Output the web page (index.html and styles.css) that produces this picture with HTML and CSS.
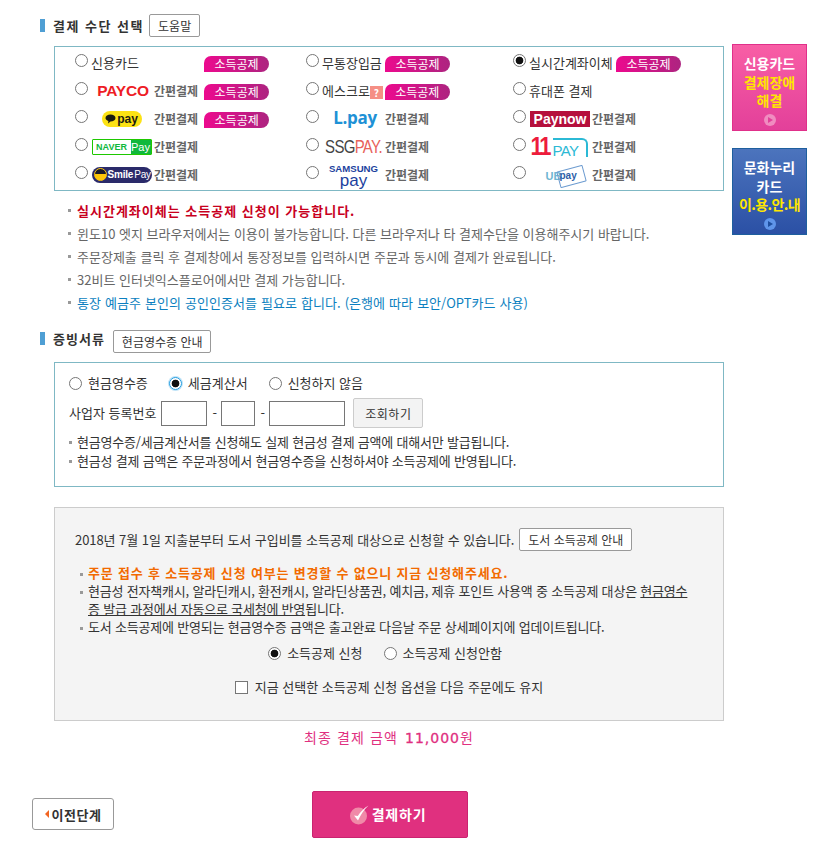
FILE: index.html
```html
<!DOCTYPE html>
<html lang="ko">
<head>
    <meta charset="utf-8">
    <title>결제</title>
    <link rel="stylesheet" href="styles.css">
</head>
<body>
    <div class="page">
        <div class="main">
            <div class="sec-title first">
                <h3>결제 수단 선택</h3>
                <button class="btn-small">도움말</button>
            </div>
            <div class="box paybox">
                <div class="cell"><input type="radio" name="pay"><span class="lbl wide1">신용카드</span><span class="badge">소득공제</span></div>
                <div class="cell"><input type="radio" name="pay"><span class="lbl wide2">무통장입금</span><span class="badge">소득공제</span></div>
                <div class="cell"><input type="radio" name="pay" checked><span class="lbl wide3">실시간계좌이체</span><span class="badge">소득공제</span></div>

                <div class="cell"><input type="radio" name="pay"><span class="logo logo1"><span class="payco">PAYCO</span></span><span class="easy">간편결제</span><span class="badge after-easy">소득공제</span></div>
                <div class="cell"><input type="radio" name="pay"><span class="lbl">에스크로</span><span class="qmark">?</span><span class="badge">소득공제</span></div>
                <div class="cell"><input type="radio" name="pay"><span class="lbl">휴대폰 결제</span></div>

                <div class="cell"><input type="radio" name="pay"><span class="logo logo1"><span class="kakao"><svg width="11" height="10" viewBox="0 0 11 10"><path d="M5.500 0.500C8.300 0.500 10.500 2 10.500 4S8.300 7.500 5.500 7.500L3 9.500 3.400 7.100C1.700 6.500 0.500 5.400 0.500 4 0.500 2 2.700 0.500 5.500 0.500Z" fill="#1a1a10"/></svg>pay</span></span><span class="easy">간편결제</span><span class="badge after-easy">소득공제</span></div>
                <div class="cell"><input type="radio" name="pay"><span class="logo logo2"><span class="lpay">L.pay</span></span><span class="easy">간편결제</span></div>
                <div class="cell"><input type="radio" name="pay"><span class="logo logo3"><span class="paynow">Paynow</span></span><span class="easy">간편결제</span></div>

                <div class="cell"><input type="radio" name="pay"><span class="logo logo1"><span class="naver"><b>NAVER</b><i>Pay</i></span></span><span class="easy">간편결제</span></div>
                <div class="cell"><input type="radio" name="pay"><span class="logo logo2"><span class="ssg">SSG<em>PAY.</em></span></span><span class="easy">간편결제</span></div>
                <div class="cell"><input type="radio" name="pay"><span class="logo logo3"><span class="elev"><b>11</b><i>PAY</i></span></span><span class="easy">간편결제</span></div>

                <div class="cell"><input type="radio" name="pay"><span class="logo logo1"><span class="smile"><u></u>Smile<small>Pay</small></span></span><span class="easy">간편결제</span></div>
                <div class="cell"><input type="radio" name="pay"><span class="logo logo2"><span class="samsung"><b>SAMSUNG</b><i>pay</i></span></span><span class="easy">간편결제</span></div>
                <div class="cell"><input type="radio" name="pay"><span class="logo logo3"><span class="ubpay"><b>UB</b><i>pay</i></span></span><span class="easy">간편결제</span></div>
            </div>
            <ul class="notes">
                <li class="red">실시간계좌이체는 소득공제 신청이 가능합니다.</li>
                <li>윈도10 엣지 브라우저에서는 이용이 불가능합니다. 다른 브라우저나 타 결제수단을 이용해주시기 바랍니다.</li>
                <li>주문장제출 클릭 후 결제창에서 통장정보를 입력하시면 주문과 동시에 결제가 완료됩니다.</li>
                <li>32비트 인터넷익스플로어에서만 결제 가능합니다.</li>
                <li class="blue">통장 예금주 본인의 공인인증서를 필요로 합니다. (은행에 따라 보안/OPT카드 사용)</li>
            </ul>

            <div class="sec-title second">
                <h3 class="tight">증빙서류</h3>
                <button class="btn-small">현금영수증 안내</button>
            </div>
            <div class="box receipt">
                <div class="radio-row">
                    <label><input type="radio" name="rc">현금영수증</label>
                    <label><input type="radio" name="rc" class="focused" checked>세금계산서</label>
                    <label><input type="radio" name="rc">신청하지 않음</label>
                </div>
                <div class="biz-row">
                    <span>사업자 등록번호</span>
                    <input type="text" class="w46"><span class="dash">-</span>
                    <input type="text" class="w34"><span class="dash">-</span>
                    <input type="text" class="w76">
                    <button class="btn-gray">조회하기</button>
                </div>
                <ul class="mini">
                    <li>현금영수증/세금계산서를 신청해도 실제 현금성 결제 금액에 대해서만 발급됩니다.</li>
                    <li>현금성 결제 금액은 주문과정에서 현금영수증을 신청하셔야 소득공제에 반영됩니다.</li>
                </ul>
            </div>

            <div class="deduct">
                <div class="deduct-top">
                    <span class="deduct-text">2018년 7월 1일 지출분부터 도서 구입비를 소득공제 대상으로 신청할 수 있습니다.</span>
                    <button class="btn-small">도서 소득공제 안내</button>
                </div>
                <ul class="mini">
                    <li class="orange">주문 접수 후 소득공제 신청 여부는 변경할 수 없으니 지금 신청해주세요.</li>
                    <li>현금성 전자책캐시, 알라딘캐시, 환전캐시, 알라딘상품권, 예치금, 제휴 포인트 사용액 중 소득공제 대상은 <u>현금영수증 발급 과정에서 자동으로 국세청에 반영</u>됩니다.</li>
                    <li>도서 소득공제에 반영되는 현금영수증 금액은 출고완료 다음날 주문 상세페이지에 업데이트됩니다.</li>
                </ul>
                <div class="radio-row center">
                    <label><input type="radio" name="dd" checked>소득공제 신청</label>
                    <label><input type="radio" name="dd">소득공제 신청안함</label>
                </div>
                <label class="keep"><input type="checkbox">지금 선택한 소득공제 신청 옵션을 다음 주문에도 유지</label>
            </div>

            <div class="total">최종 결제 금액 <b>11,000</b>원</div>

            <div class="actions">
                <button class="btn-prev"><span class="arrow"></span>이전단계</button>
                <button class="btn-pay">
                    <svg width="19" height="21" viewBox="0 0 19 21"><circle cx="8.500" cy="12" r="8.500" fill="#f08aa8"/><path d="M4 11.500 8 16.500C10 12 13.500 6 18.500 1.500 13.500 4.500 10.500 8 7.800 12Z" fill="#fff"/></svg>
                    결제하기
                </button>
            </div>
        </div>

        <div class="side">
            <a class="banner pink"><span>신용카드</span><span class="yellow">결제장애<br>해결</span><i class="play"></i></a>
            <a class="banner navy"><span>문화누리<br>카드</span><span class="yellow">이.용.안.내</span><i class="play"></i></a>
        </div>
    </div>
</body>
</html>
```

FILE: styles.css
```css
* {
    box-sizing: border-box;
}
body, ul, h3 {
    margin: 0;
}
ul {
    padding-left: 0;
    list-style-type: none;
}
body {
    background: #fff;
    color: #333;
    font-family: "Noto Sans CJK KR", "Liberation Sans", sans-serif;
    font-size: 13px;
    line-height: 16px;
}
button {
    font-family: inherit;
    padding: 0;
    cursor: pointer;
}
input[type=radio] {
    appearance: none;
    flex: none;
    width: 13px;
    height: 13px;
    margin: 0;
    border: 1px solid #767676;
    border-radius: 50%;
    background: #fff;
}
input[type=radio]:checked {
    background: radial-gradient(circle, #111 0, #111 3.5px, #fff 4.2px);
}
input[type=radio].focused {
    border-color: #1f9be0;
    box-shadow: 0 0 0 1px #bfe3f7;
}
.page {
    display: flex;
    align-items: flex-start;
    padding-left: 40px;
}
.main {
    width: 684px;
    flex: none;
}
.sec-title {
    display: flex;
    align-items: center;
    height: 23px;
    margin-top: 14px;
}
.sec-title.second {
    margin-top: 16px;
}
.sec-title h3 {
    font-size: 13px;
    font-weight: 700;
    letter-spacing: 1.5px;
    color: #333;
    border-left: 5px solid #4f9fd4;
    padding-left: 8px;
    height: 13px;
    line-height: 13px;
    margin-right: 5px;
}
.sec-title h3.tight {
    letter-spacing: 1px;
    margin-right: 8px;
    margin-bottom: 6px;
}
.btn-small {
    height: 23px;
    padding: 0 8px;
    background: #fff;
    border: 1px solid #999;
    border-radius: 2px;
    font-size: 12px;
    color: #333;
}
.box {
    border: 1px solid #7fb8c4;
    margin-left: 14px;
    width: 670px;
}
.paybox {
    display: grid;
    grid-template-columns: 231px 207px 1fr;
    grid-auto-rows: 27.8px;
    height: 145px;
    margin-top: 9px;
    padding: 2px 0 0 20px;
}
.cell {
    display: flex;
    align-items: center;
    position: relative;
}
.cell input {
    margin: -4px 3px 0 0;
}
.lbl {
    white-space: nowrap;
}
.wide1 {
    width: 113px;
}
.wide2 {
    width: 63px;
}
.wide3 {
    width: 87px;
}
.badge {
    width: 65px;
    height: 16px;
    margin-top: 3px;
    border-radius: 7px 8px 8px 0;
    background: linear-gradient(90deg, #ec0a8e, #ad2480);
    color: #fff;
    font-size: 12px;
    line-height: 16px;
    text-align: center;
}
.after-easy {
    margin-left: 6px;
}
.easy {
    font-size: 12px;
    font-weight: 700;
    color: #666;
    white-space: nowrap;
    margin-top: 1px;
}
.logo {
    display: flex;
    align-items: center;
    justify-content: center;
    height: 20px;
    margin-top: 1px;
    white-space: nowrap;
}
.logo1 {
    width: 63px;
    margin-left: -1px;
    margin-right: 1px;
}
.logo2, .logo3 {
    width: 63px;
}
.payco {
    font-family: "Liberation Sans", sans-serif;
    font-size: 15.500px;
    font-weight: 700;
    color: #ee1c25;
    letter-spacing: -0.2px;
    padding-left: 3px;
}
.kakao {
    display: flex;
    align-items: center;
    justify-content: center;
    gap: 1px;
    width: 40px;
    height: 16px;
    border-radius: 8px;
    background: #fce214;
    font-family: "Liberation Sans", sans-serif;
    font-size: 12px;
    font-weight: 700;
    color: #1a1a10;
}
.lpay {
    font-family: "Open Sans", sans-serif;
    font-size: 17px;
    font-weight: 700;
    color: #1e91d6;
    letter-spacing: -0.3px;
    padding-left: 3px;
    margin-top: -2px;
}
.paynow {
    display: block;
    width: 60px;
    height: 16px;
    margin-right: 1px;
    background: #b50f3c;
    color: #fff;
    font-family: "Liberation Sans", sans-serif;
    font-size: 14px;
    font-weight: 700;
    line-height: 16px;
    text-align: center;
}
.naver {
    display: flex;
    width: 60px;
    height: 16px;
    border: 1px solid #1ec800;
    border-radius: 1px;
    font-family: "Liberation Sans", sans-serif;
    line-height: 14px;
}
.naver b {
    flex: 1;
    color: #10b83c;
    font-size: 9px;
    text-align: center;
}
.naver i {
    width: 20px;
    background: #10b83c;
    color: #fff;
    font-size: 11px;
    font-style: normal;
    text-align: center;
}
.ssg {
    display: inline-block;
    font-family: "Liberation Sans", sans-serif;
    font-size: 15px;
    letter-spacing: -0.7px;
    color: #444;
    transform: scaleY(1.2);
}
.ssg em {
    font-style: normal;
    color: #e8625a;
}
.elev {
    display: flex;
    align-items: flex-end;
    width: 57px;
    height: 20px;
    margin-right: 3px;
    font-family: "Liberation Sans", sans-serif;
}
.elev b {
    width: 20px;
    color: #ed1c3c;
    font-size: 22px;
    line-height: 20px;
    letter-spacing: -2.2px;
    transform: scaleY(1.15);
}
.elev i {
    flex: 1;
    height: 19px;
    margin-left: 2px;
    border-top: 2px solid #2bb9d5;
    border-right: 2px solid #2bb9d5;
    border-top-right-radius: 6px;
    color: #2bb9d5;
    font-size: 15px;
    font-style: normal;
    letter-spacing: -0.6px;
    line-height: 22px;
}
.smile {
    display: flex;
    align-items: center;
    width: 60px;
    height: 16px;
    border-radius: 8px;
    background: #2a2a6a;
    color: #fff;
    font-family: "Liberation Sans", sans-serif;
    font-size: 10px;
    font-weight: 700;
    letter-spacing: -0.2px;
}
.smile small {
    font-size: 10px;
    font-weight: 400;
    margin-left: 1px;
}
.smile u {
    width: 13px;
    height: 13px;
    margin: 0 1px 0 2px;
    flex: none;
    border: 1px solid #fdc60a;
    border-radius: 50%;
    background: linear-gradient(#1a1a2a 45%, #fdc60a 45%);
}
.samsung {
    display: flex;
    flex-direction: column;
    align-items: center;
    font-family: "Liberation Sans", sans-serif;
    color: #1c3f9e;
    margin-top: 2px;
}
.samsung b {
    font-size: 9.600px;
    line-height: 10px;
}
.samsung i {
    font-size: 17px;
    font-style: normal;
    line-height: 13px;
}
.ubpay {
    display: flex;
    align-items: center;
    position: relative;
    width: 40px;
    height: 14px;
    margin-left: 10px;
    margin-top: 2px;
    font-family: "Liberation Sans", sans-serif;
    font-size: 10px;
    font-weight: 700;
}
.ubpay b {
    width: 14px;
    color: #6fb6d2;
    font-size: 11px;
}
.ubpay i {
    color: #2e5fa8;
    font-style: normal;
}
.ubpay::after {
    content: "";
    position: absolute;
    left: 12px;
    top: -1px;
    width: 25px;
    height: 15px;
    border: 1px solid #6c9bd0;
    border-radius: 1px;
    transform: rotate(-15deg);
}
.qmark {
    width: 13px;
    height: 13px;
    margin: 4px 2px 0 0;
    background: #f58f85;
    color: #fff;
    font-size: 10px;
    font-weight: 700;
    line-height: 13px;
    text-align: center;
}
.notes {
    margin: 8px 0 0 28px;
    color: #666;
}
.notes li, .mini li {
    position: relative;
}
.notes li {
    padding-left: 9px;
    height: 23px;
    line-height: 23px;
    white-space: nowrap;
}
.notes li::before, .mini li::before {
    content: "";
    position: absolute;
    left: 0;
    top: 10px;
    width: 3px;
    height: 3px;
    background: #999;
}
.notes .red {
    color: #c8001e;
    font-weight: 700;
    letter-spacing: 1px;
}
.notes .blue {
    color: #0b7fc0;
    word-spacing: 0.5px;
}
.receipt {
    height: 125px;
    margin-top: 9px;
    padding: 12px 14px 0;
}
.radio-row {
    display: flex;
    align-items: center;
    gap: 21px;
    height: 16px;
}
.radio-row label {
    display: flex;
    align-items: center;
    gap: 6px;
}
.biz-row {
    display: flex;
    align-items: center;
    height: 30px;
    margin-top: 7px;
    gap: 5px;
}
.biz-row input {
    height: 25px;
    padding: 0;
    border: 1px solid #767676;
    background: #fff;
}
.dash {
    width: 4px;
    text-align: center;
}
.w46 {
    width: 46px;
}
.w34 {
    width: 34px;
}
.w76 {
    width: 76px;
}
.btn-gray {
    width: 70px;
    height: 30px;
    margin-left: 3px;
    background: #f3f3f3;
    border: 1px solid #ccc;
    border-radius: 2px;
    color: #333;
    font-size: 12px;
    letter-spacing: 0.5px;
}
.mini {
    color: #333;
    letter-spacing: -0.2px;
}
.mini li {
    padding-left: 8px;
    line-height: 18px;
}
.mini li::before {
    top: 9px;
}
.receipt .mini {
    margin-top: 4px;
}
.receipt .mini li {
    line-height: 19px;
}
.deduct {
    width: 670px;
    height: 214px;
    margin: 20px 0 0 14px;
    padding: 20px 20px 0;
    background: #f4f4f4;
    border: 1px solid #ccc;
}
.deduct-top {
    display: flex;
    align-items: center;
    gap: 5px;
    height: 23px;
}
.deduct-text {
    letter-spacing: -0.06px;
}
.deduct .mini {
    margin-top: 13px;
    padding-left: 5px;
    padding-right: 7px;
}
.deduct .orange {
    color: #f26a00;
    font-weight: 700;
    letter-spacing: 0.82px;
}
.deduct u {
    text-decoration: underline;
}
.center {
    justify-content: center;
    margin-top: 9px;
    padding-right: 8px;
}
.keep {
    display: flex;
    align-items: center;
    justify-content: center;
    gap: 7px;
    margin-top: 18px;
}
.keep input {
    width: 13px;
    height: 13px;
    margin: 0;
    appearance: none;
    border: 1px solid #767676;
    background: #fff;
}
.total {
    margin-top: 7px;
    padding-left: 14px;
    text-align: center;
    font-size: 14px;
    line-height: 18px;
    color: #e0307f;
    letter-spacing: 1.1px;
}
.total b {
    margin-left: 2px;
    font-family: "DejaVu Sans", sans-serif;
    font-size: 14px;
    font-weight: 400;
    letter-spacing: 1px;
    -webkit-text-stroke: 0.3px #e0307f;
}
.actions {
    height: 48px;
    margin-top: 43px;
    display: flex;
    align-items: center;
}
.btn-prev {
    display: flex;
    align-items: center;
    justify-content: center;
    gap: 3px;
    width: 82px;
    height: 32px;
    margin-left: -8px;
    background: #fff;
    border: 1px solid #999;
    border-radius: 3px;
    font-size: 13px;
    font-weight: 700;
    letter-spacing: 0.5px;
    color: #333;
}
.arrow {
    border-right: 4px solid #f26522;
    border-top: 4px solid transparent;
    border-bottom: 4px solid transparent;
}
.btn-pay {
    display: flex;
    align-items: center;
    justify-content: center;
    gap: 3px;
    width: 156px;
    height: 47px;
    margin-left: 198px;
    padding-right: 4px;
    background: #e0307f;
    border: 1px solid #c92470;
    border-radius: 2px;
    color: #fff;
    font-size: 14px;
    font-weight: 700;
    letter-spacing: 0.8px;
}
.side {
    width: 75px;
    margin: 44px 0 0 8px;
    flex: none;
    display: flex;
    flex-direction: column;
    gap: 17px;
}
.banner {
    display: flex;
    flex-direction: column;
    align-items: center;
    padding-top: 9px;
    height: 87px;
    border: 1px solid #e0308a;
    font-size: 14px;
    font-weight: 700;
    line-height: 18.500px;
    text-align: center;
    color: #fff;
}
.banner .yellow {
    color: #ffe600;
}
.pink {
    background: linear-gradient(#f85ea5, #e3409a);
}
.navy {
    border-color: #1e5f9e;
    background: linear-gradient(#4c74bd, #2b50a5);
}
.navy .yellow {
    letter-spacing: -0.6px;
}
.play {
    width: 12px;
    height: 12px;
    margin-top: 4px;
    border-radius: 50%;
    background: #f08cc0;
    position: relative;
}
.navy .play {
    background: #5f95ea;
}
.play::after {
    content: "";
    position: absolute;
    left: 4px;
    top: 3px;
    border-left: 5px solid #e3409a;
    border-top: 3px solid transparent;
    border-bottom: 3px solid transparent;
}
.navy .play::after {
    border-left-color: #1e4fa0;
}
```
